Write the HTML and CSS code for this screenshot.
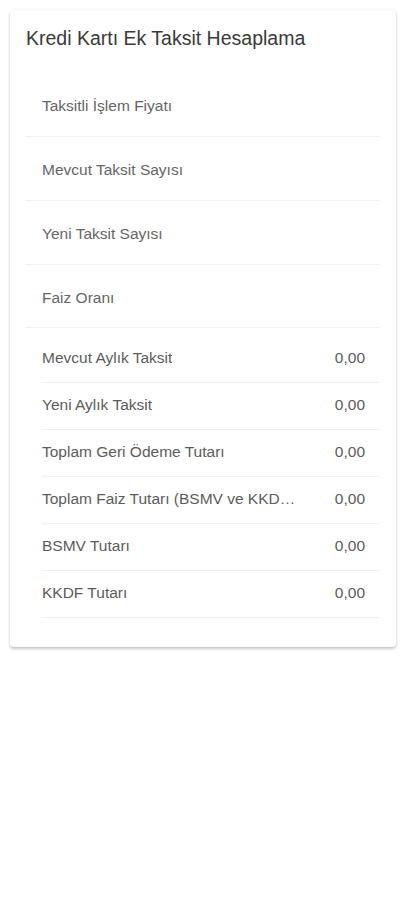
FILE: index.html
```html
<!DOCTYPE html>
<html lang="tr">
<head>
  <meta charset="UTF-8" />
  <meta name="viewport" content="width=device-width, initial-scale=1.0"/>
  <title>Kredi Kartı Ek Taksit Hesaplama</title>
  <link rel="stylesheet" href="styles.css">
</head>
<body>
  <div class="card">
    <div class="card-title">Kredi Kartı Ek Taksit Hesaplama</div>

    <div class="inputs">
      <label class="field"><input type="text" placeholder="Taksitli İşlem Fiyatı" /></label>
      <label class="field"><input type="text" placeholder="Mevcut Taksit Sayısı" /></label>
      <label class="field"><input type="text" placeholder="Yeni Taksit Sayısı" /></label>
      <label class="field"><input type="text" placeholder="Faiz Oranı" /></label>
    </div>

    <div class="results">
      <div class="row"><span class="label">Mevcut Aylık Taksit</span><span class="value">0,00</span></div>
      <div class="row"><span class="label">Yeni Aylık Taksit</span><span class="value">0,00</span></div>
      <div class="row"><span class="label">Toplam Geri Ödeme Tutarı</span><span class="value">0,00</span></div>
      <div class="row"><span class="label">Toplam Faiz Tutarı (BSMV ve KKDF Dahil)</span><span class="value">0,00</span></div>
      <div class="row"><span class="label">BSMV Tutarı</span><span class="value">0,00</span></div>
      <div class="row"><span class="label">KKDF Tutarı</span><span class="value">0,00</span></div>
    </div>
  </div>
</body>
</html>
```

FILE: styles.css
```css
* {
  box-sizing: border-box;
}

body {
  margin: 0;
  font-family: 'Liberation Sans', Arial, sans-serif;
  background: #fff;
  padding: 10px;
}

.card {
  background: #fff;
  border-radius: 4px;
  box-shadow: 0 2px 3px rgba(0, 0, 0, 0.22), 0 0 2px rgba(0, 0, 0, 0.08);
  padding: 16px 16px 29px 16px;
}

.card-title {
  font-size: 19.5px;
  color: #3a3a3a;
  line-height: 24px;
  margin-bottom: 23px;
}

.field {
  display: block;
  height: 64px;
  border-bottom: 1px solid #f0f0f0;
}

.field:nth-child(4) {
  height: 63px;
}

.field input {
  width: 100%;
  height: 62px;
  border: none;
  outline: none;
  background: transparent;
  padding: 4px 16px 0 16px;
  font-family: inherit;
  font-size: 15.5px;
  color: #333;
}

.field input::placeholder {
  color: #666;
}

.results {
  padding: 8px 0 0 16px;
}

.row {
  display: flex;
  align-items: center;
  justify-content: space-between;
  height: 47px;
  padding: 0 15px 2px 0;
  border-bottom: 1px solid #f0f0f0;
  font-size: 15.5px;
  color: #5c5c5c;
}

.label {
  overflow: hidden;
  white-space: nowrap;
  text-overflow: ellipsis;
  max-width: 258px;
}

.value {
  color: #5c5c5c;
}
```
